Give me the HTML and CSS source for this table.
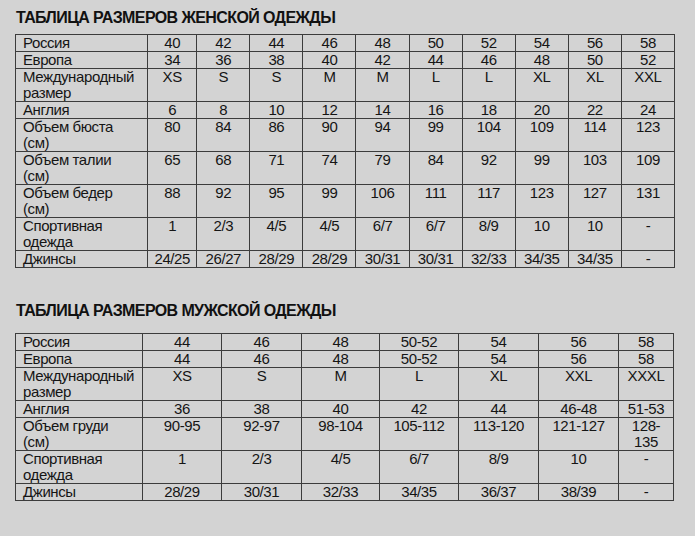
FILE: index.html
```html
<!DOCTYPE html>
<html lang="ru">
<head>
<meta charset="utf-8">
<title>Таблица размеров</title>
<link rel="stylesheet" href="styles.css">
</head>
<body>
<div class="page">
  <h2 class="title title-women">ТАБЛИЦА РАЗМЕРОВ ЖЕНСКОЙ ОДЕЖДЫ</h2>
  <table class="sizes women">
    <colgroup>
      <col class="w-label">
      <col class="w-first">
      <col class="w-col"><col class="w-col"><col class="w-col"><col class="w-col">
      <col class="w-col"><col class="w-col"><col class="w-col"><col class="w-col"><col class="w-col">
    </colgroup>
    <tr><th>Россия</th><td>40</td><td>42</td><td>44</td><td>46</td><td>48</td><td>50</td><td>52</td><td>54</td><td>56</td><td>58</td></tr>
    <tr><th>Европа</th><td>34</td><td>36</td><td>38</td><td>40</td><td>42</td><td>44</td><td>46</td><td>48</td><td>50</td><td>52</td></tr>
    <tr><th>Международный<br>размер</th><td>XS</td><td>S</td><td>S</td><td>M</td><td>M</td><td>L</td><td>L</td><td>XL</td><td>XL</td><td>XXL</td></tr>
    <tr><th>Англия</th><td>6</td><td>8</td><td>10</td><td>12</td><td>14</td><td>16</td><td>18</td><td>20</td><td>22</td><td>24</td></tr>
    <tr><th>Объем бюста<br>(см)</th><td>80</td><td>84</td><td>86</td><td>90</td><td>94</td><td>99</td><td>104</td><td>109</td><td>114</td><td>123</td></tr>
    <tr><th>Объем талии<br>(см)</th><td>65</td><td>68</td><td>71</td><td>74</td><td>79</td><td>84</td><td>92</td><td>99</td><td>103</td><td>109</td></tr>
    <tr><th>Объем бедер<br>(см)</th><td>88</td><td>92</td><td>95</td><td>99</td><td>106</td><td>111</td><td>117</td><td>123</td><td>127</td><td>131</td></tr>
    <tr><th>Спортивная<br>одежда</th><td>1</td><td>2/3</td><td>4/5</td><td>4/5</td><td>6/7</td><td>6/7</td><td>8/9</td><td>10</td><td>10</td><td>-</td></tr>
    <tr><th>Джинсы</th><td>24/25</td><td>26/27</td><td>28/29</td><td>28/29</td><td>30/31</td><td>30/31</td><td>32/33</td><td>34/35</td><td>34/35</td><td>-</td></tr>
  </table>

  <h2 class="title title-men">ТАБЛИЦА РАЗМЕРОВ МУЖСКОЙ ОДЕЖДЫ</h2>
  <table class="sizes men">
    <colgroup>
      <col class="m-label">
      <col class="m-col"><col class="m-col2"><col class="m-col3"><col class="m-col">
      <col class="m-col2"><col class="m-col2"><col class="m-last">
    </colgroup>
    <tr><th>Россия</th><td>44</td><td>46</td><td>48</td><td>50-52</td><td>54</td><td>56</td><td>58</td></tr>
    <tr><th>Европа</th><td>44</td><td>46</td><td>48</td><td>50-52</td><td>54</td><td>56</td><td>58</td></tr>
    <tr><th>Международный<br>размер</th><td>XS</td><td>S</td><td>M</td><td>L</td><td>XL</td><td>XXL</td><td>XXXL</td></tr>
    <tr><th>Англия</th><td>36</td><td>38</td><td>40</td><td>42</td><td>44</td><td>46-48</td><td>51-53</td></tr>
    <tr><th>Объем груди<br>(см)</th><td>90-95</td><td>92-97</td><td>98-104</td><td>105-112</td><td>113-120</td><td>121-127</td><td>128-<br>135</td></tr>
    <tr><th>Спортивная<br>одежда</th><td>1</td><td>2/3</td><td>4/5</td><td>6/7</td><td>8/9</td><td>10</td><td>-</td></tr>
    <tr><th>Джинсы</th><td>28/29</td><td>30/31</td><td>32/33</td><td>34/35</td><td>36/37</td><td>38/39</td><td>-</td></tr>
  </table>
</div>
</body>
</html>
```

FILE: styles.css
```css
html, body {
  margin: 0;
  padding: 0;
  background: #d3d3d3;
}

.page {
  padding: 8px 0 0 15px;
  font-family: "Liberation Sans", Arial, sans-serif;
  color: #151515;
}

.title {
  margin: 0;
  padding-left: 1px;
  font-size: 16px;
  line-height: 19px;
  font-weight: bold;
  letter-spacing: -0.6px;
  color: #111;
}

.title-women {
  margin-bottom: 7px;
}

.title-men {
  margin-top: 33px;
  margin-bottom: 13px;
}

.sizes {
  border-collapse: collapse;
  table-layout: fixed;
  font-size: 15px;
  line-height: 16px;
  letter-spacing: -0.4px;
}

.sizes.women { width: 660px; }
.sizes.men { width: 658px; }

.sizes th,
.sizes td {
  border: 1px solid #3c3c3c;
  vertical-align: top;
  padding: 0 2px;
  font-weight: normal;
}

.sizes th {
  text-align: left;
  padding-left: 7px;
}

.sizes td {
  text-align: center;
}

.w-label { width: 132px; }
.w-first { width: 49px; }
.w-col { width: 53px; }

.m-label { width: 127px; }
.m-col { width: 79px; }
.m-col2 { width: 80px; }
.m-col3 { width: 78px; }
.m-last { width: 55px; }
```
